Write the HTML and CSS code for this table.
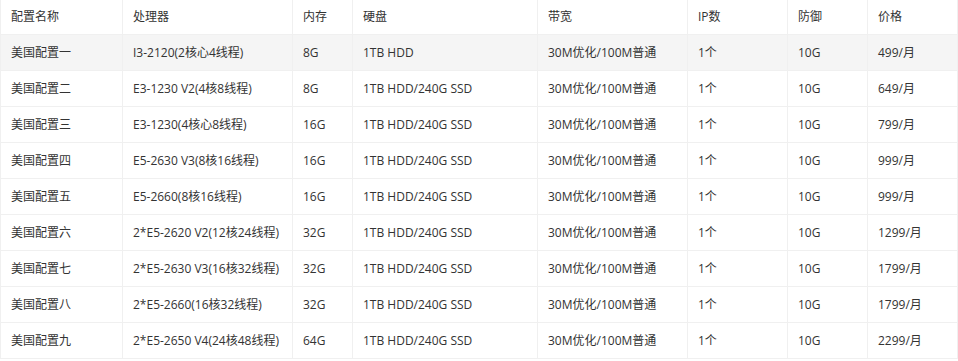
FILE: index.html
```html
<!DOCTYPE html>
<html lang="zh-CN">
<head>
<meta charset="utf-8">
<link rel="stylesheet" href="styles.css">
</head>
<body>
<table class="spec">
<colgroup>
<col class="c1"><col class="c2"><col class="c3"><col class="c4"><col class="c5"><col class="c6"><col class="c7"><col class="c8">
</colgroup>
<thead>
<tr><th>配置名称</th><th>处理器</th><th>内存</th><th>硬盘</th><th>带宽</th><th>IP数</th><th>防御</th><th>价格</th></tr>
</thead>
<tbody>
<tr class="hl"><td>美国配置一</td><td>I3-2120(2核心4线程)</td><td>8G</td><td>1TB HDD</td><td>30M优化/100M普通</td><td>1个</td><td>10G</td><td>499/月</td></tr>
<tr><td>美国配置二</td><td>E3-1230 V2(4核8线程)</td><td>8G</td><td>1TB HDD/240G SSD</td><td>30M优化/100M普通</td><td>1个</td><td>10G</td><td>649/月</td></tr>
<tr><td>美国配置三</td><td>E3-1230(4核心8线程)</td><td>16G</td><td>1TB HDD/240G SSD</td><td>30M优化/100M普通</td><td>1个</td><td>10G</td><td>799/月</td></tr>
<tr><td>美国配置四</td><td>E5-2630 V3(8核16线程)</td><td>16G</td><td>1TB HDD/240G SSD</td><td>30M优化/100M普通</td><td>1个</td><td>10G</td><td>999/月</td></tr>
<tr><td>美国配置五</td><td>E5-2660(8核16线程)</td><td>16G</td><td>1TB HDD/240G SSD</td><td>30M优化/100M普通</td><td>1个</td><td>10G</td><td>999/月</td></tr>
<tr><td>美国配置六</td><td>2*E5-2620 V2(12核24线程)</td><td>32G</td><td>1TB HDD/240G SSD</td><td>30M优化/100M普通</td><td>1个</td><td>10G</td><td>1299/月</td></tr>
<tr><td>美国配置七</td><td>2*E5-2630 V3(16核32线程)</td><td>32G</td><td>1TB HDD/240G SSD</td><td>30M优化/100M普通</td><td>1个</td><td>10G</td><td>1799/月</td></tr>
<tr><td>美国配置八</td><td>2*E5-2660(16核32线程)</td><td>32G</td><td>1TB HDD/240G SSD</td><td>30M优化/100M普通</td><td>1个</td><td>10G</td><td>1799/月</td></tr>
<tr><td>美国配置九</td><td>2*E5-2650 V4(24核48线程)</td><td>64G</td><td>1TB HDD/240G SSD</td><td>30M优化/100M普通</td><td>1个</td><td>10G</td><td>2299/月</td></tr>
</tbody>
</table>
</body>
</html>
```
FILE: styles.css
```css
html, body {
  margin: 0;
  padding: 0;
  background: #fff;
}
.spec {
  border-collapse: collapse;
  table-layout: fixed;
  width: 957px;
  margin-top: -1px;
  font-family: "Open Sans", "Noto Sans CJK SC", sans-serif;
  font-size: 12px;
  color: #333;
}
.c1 { width: 122px; }
.c2 { width: 170px; }
.c3 { width: 60px; }
.c4 { width: 185px; }
.c5 { width: 150px; }
.c6 { width: 100px; }
.c7 { width: 80px; }
.c8 { width: 90px; }
.spec th,
.spec td {
  border: 1px solid #f0f0f0;
  padding: 0 10px;
  text-align: left;
  font-weight: normal;
  white-space: nowrap;
  line-height: 16px;
}
.spec th {
  height: 35px;
  box-sizing: border-box;
}
.spec td {
  height: 36px;
  box-sizing: border-box;
}
.spec tr.hl td {
  background: #f5f5f5;
}
```
